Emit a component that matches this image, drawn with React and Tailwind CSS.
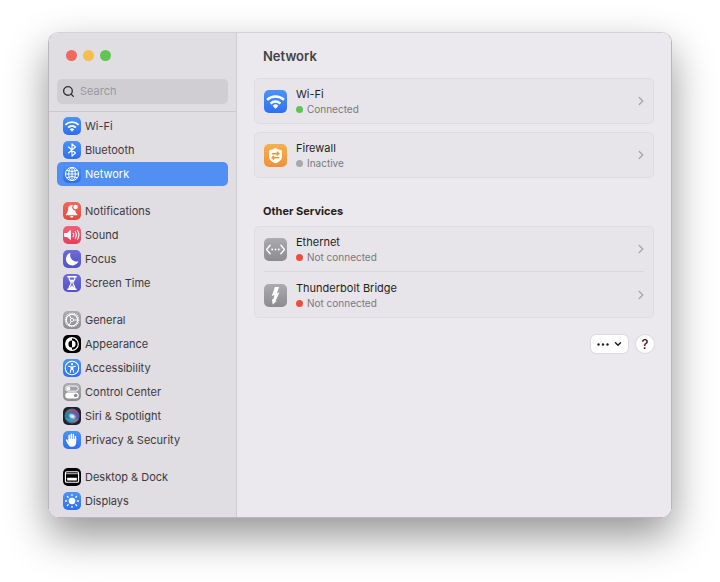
import { ChevronDown, ChevronRight, Search } from "lucide-react"

// Glyphs share a 24x24 canvas and take the colour of the tile they sit on

function WifiGlyph() {
  return (
    <svg viewBox="0 0 24 24" fill="none" stroke="currentColor" strokeWidth="2.5" className="size-full">
      <path d="M3.2 10.4a12.6 12.6 0 0 1 17.6 0" />
      <path d="M6.9 14.1a7.4 7.4 0 0 1 10.2 0" />
      <path d="M12 19.6 9 16.4a4.3 4.3 0 0 1 6 0z" fill="currentColor" stroke="none" />
    </svg>
  )
}

function BluetoothGlyph() {
  return (
    <svg viewBox="0 0 24 24" fill="none" stroke="currentColor" strokeWidth="1.5" strokeLinejoin="round" strokeLinecap="round" className="size-full">
      <path d="m7.4 8 9.2 8-4.6 4.2V3.8L16.6 8l-9.2 8" />
    </svg>
  )
}

function GlobeGlyph() {
  return (
    <svg viewBox="0 0 24 24" fill="none" stroke="currentColor" strokeWidth="1.3" className="size-full">
      <circle cx="12" cy="12" r="8.8" />
      <ellipse cx="12" cy="12" rx="4.4" ry="8.8" />
      <path d="M12 3.2v17.6M3.2 12h17.6M5 6.9q7 4 14 0M5 17.1q7-4 14 0" />
    </svg>
  )
}

function BellGlyph() {
  return (
    <svg viewBox="0 0 24 24" fill="currentColor" className="size-full">
      <path d="M13.2 4.2a5 5 0 0 0-6.4 4.6c-.2 4.4-.9 5.7-2.8 7.5-.5.5-.2 1.3.5 1.3h14c.7 0 1-.8.5-1.3-1.5-1.5-2.3-2.6-2.6-5a4.3 4.3 0 0 1-3.2-7.1z" />
      <path d="M9.3 18.7h4.6a2.3 2.3 0 0 1-4.6 0z" />
      <circle cx="16.8" cy="6.8" r="3" />
    </svg>
  )
}

function SpeakerGlyph() {
  return (
    <svg viewBox="0 0 24 24" fill="none" stroke="currentColor" strokeWidth="1.4" strokeLinecap="round" className="size-full">
      <path d="M2.4 9.4h3l4.2-3.7c.4-.3.9-.1.9.4v11.8c0 .5-.5.7-.9.4l-4.2-3.7h-3c-.4 0-.8-.3-.8-.8v-3.6c0-.5.4-.8.8-.8z" fill="currentColor" stroke="none" />
      <path d="M13.4 9.6a4.2 4.2 0 0 1 0 4.8M16.3 7.7a7.6 7.6 0 0 1 0 8.6M19.2 5.9a11 11 0 0 1 0 12.2" />
    </svg>
  )
}

function MoonGlyph() {
  return (
    <svg viewBox="0 0 24 24" fill="currentColor" className="size-full">
      <path d="M9 4.1a.6.6 0 0 1 .8.8 8.3 8.3 0 0 0 9.8 10.3.6.6 0 0 1 .7.9A8.7 8.7 0 1 1 9 4.1z" />
    </svg>
  )
}

function HourglassGlyph() {
  return (
    <svg viewBox="0 0 24 24" fill="none" stroke="currentColor" strokeWidth="1.5" strokeLinecap="round" strokeLinejoin="round" className="size-full">
      <path d="M6.5 3.8h11M6.5 20.2h11" strokeWidth="2" />
      <path d="M8 4.5c0 4 2.8 5 2.8 7.5S8 15.5 8 19.5h8c0-4-2.8-5-2.8-7.5S16 8.5 16 4.5" />
      <path d="M9.6 8h4.8L12 11.2zM9 19c0-2 3-3.4 3-3.4s3 1.4 3 3.4z" fill="currentColor" strokeWidth=".8" />
    </svg>
  )
}

function GearGlyph() {
  return (
    <svg viewBox="0 0 24 24" fill="none" stroke="currentColor" className="size-full">
      <circle cx="12" cy="12" r="8.9" strokeWidth="1.4" strokeDasharray="1.4 .93" />
      <circle cx="12" cy="12" r="7.6" strokeWidth="1.5" />
      <circle cx="12" cy="12" r="2.2" strokeWidth="1.2" />
      <path d="M14.2 12h5.4M10.9 10.1 8.2 5.4M10.9 13.9l-2.7 4.7" strokeWidth="1.3" />
    </svg>
  )
}

function AppearanceGlyph() {
  return (
    <svg viewBox="0 0 24 24" fill="none" className="size-full">
      <circle cx="12" cy="12" r="8.4" stroke="currentColor" strokeWidth="1.6" />
      <path d="M12 3.6a8.4 8.4 0 0 0 0 16.8v-3.6a4.8 4.8 0 0 1 0-9.6z" fill="currentColor" />
      <path d="M12 7.2a4.8 4.8 0 0 1 0 9.6z" fill="currentColor" />
    </svg>
  )
}

function AccessibilityGlyph() {
  return (
    <svg viewBox="0 0 24 24" fill="none" stroke="currentColor" strokeLinecap="round" strokeLinejoin="round" className="size-full">
      <circle cx="12" cy="12" r="9" strokeWidth="1.4" />
      <circle cx="12" cy="6.9" r="1.5" fill="currentColor" stroke="none" />
      <path d="M7.4 9.7 12 10.6l4.6-.9M12 10.6v3M9.7 17.8l1.2-4.6v-2.5h2.2v2.5l1.2 4.6" strokeWidth="1.4" />
    </svg>
  )
}

function ControlsGlyph() {
  return (
    <svg viewBox="0 0 24 24" fill="none" className="size-full">
      <rect x="3.6" y="4" width="16.8" height="6.8" rx="3.4" stroke="currentColor" strokeWidth="1.3" />
      <circle cx="7.2" cy="7.4" r="2.5" fill="currentColor" />
      <rect x="3" y="12.8" width="18" height="7.8" rx="3.9" fill="currentColor" />
      <circle cx="16.9" cy="16.7" r="2.4" fill="#8e8e92" />
    </svg>
  )
}

function SiriGlyph() {
  return (
    <svg viewBox="0 0 24 24" className="size-full">
      <defs>
        <radialGradient id="siri-core">
          <stop offset="0" stopColor="#ffffff" />
          <stop offset=".45" stopColor="#a9dcec" stopOpacity=".9" />
          <stop offset="1" stopColor="#4a8fd0" stopOpacity="0" />
        </radialGradient>
        <linearGradient id="siri-ring" x1="0" y1="0" x2="1" y2="1">
          <stop offset="0" stopColor="#2f8f86" />
          <stop offset=".45" stopColor="#2f6fa8" />
          <stop offset=".75" stopColor="#7c4aa8" />
          <stop offset="1" stopColor="#d0345e" />
        </linearGradient>
      </defs>
      <circle cx="12" cy="12" r="10" fill="url(#siri-ring)" />
      <path d="M4 6.5C9 1.5 19 3 21.5 11c-5-4-11-5-17.5-4.5z" fill="#d63a6b" opacity=".75" />
      <path d="M3 14c3 7 13 9 18 2-6 1-12 0-18-2z" fill="#38b89c" opacity=".7" />
      <ellipse cx="12.5" cy="12.3" rx="7" ry="5" fill="url(#siri-core)" transform="rotate(25 12 12)" />
    </svg>
  )
}

function HandGlyph() {
  return (
    <svg viewBox="0 0 24 24" fill="none" stroke="currentColor" strokeWidth="2" strokeLinecap="round" className="size-full">
      <path d="M8.2 12V6M11 11V4.2M13.8 11V4.8M16.6 12V7.4" />
      <path d="m4.9 12.2 2.3 4.2" strokeWidth="2.2" />
      <path d="M7.2 10.5h10.4v4.2c0 3.8-2 6.3-5.4 6.3-2.8 0-4.4-1.3-5.6-3.8l-.8-2 1.4-.8z" fill="currentColor" stroke="none" />
    </svg>
  )
}

function DockGlyph() {
  return (
    <svg viewBox="0 0 24 24" fill="none" stroke="currentColor" className="size-full">
      <rect x="3.2" y="5" width="17.6" height="14" rx="1.8" strokeWidth="1.5" />
      <path d="M4 7.4h16" strokeWidth="1.6" opacity=".6" />
      <rect x="5.6" y="13" width="12.8" height="3.8" rx=".6" fill="currentColor" stroke="none" />
    </svg>
  )
}

function SunGlyph() {
  return (
    <svg viewBox="0 0 24 24" fill="none" stroke="currentColor" strokeWidth="1.7" strokeLinecap="round" className="size-full">
      <circle cx="12" cy="12" r="4.4" fill="currentColor" stroke="none" />
      <path d="M12 3.4v1.4M12 19.2v1.4M3.4 12h1.4M19.2 12h1.4M5.9 5.9l1 1M17.1 17.1l1 1M5.9 18.1l1-1M17.1 6.9l1-1" />
    </svg>
  )
}

function ShieldGlyph() {
  return (
    <svg viewBox="0 0 24 24" fill="none" className="size-full">
      <path d="M12 4c2 1.5 4 2.2 6 2.5.5.1.8.5.8 1v5.8c0 3.3-2.8 5.2-6.3 6.8-.3.2-.7.2-1 0-3.5-1.6-6.3-3.5-6.3-6.8V7.5c0-.5.3-.9.8-1C8 6.2 10 5.5 12 4z" fill="currentColor" />
      <path d="M8.2 10.1h7M13.5 8.2l2 1.9-2 1.9M15.8 14.3h-7M10.5 12.4l-2 1.9 2 1.9" stroke="#f0983a" strokeWidth="1.5" />
    </svg>
  )
}

function EthernetGlyph() {
  return (
    <svg viewBox="0 0 24 24" fill="none" stroke="currentColor" strokeWidth="1.4" strokeLinecap="round" strokeLinejoin="round" className="size-full">
      <path d="M6.4 7.6 2.7 12l3.7 4.4M17.6 7.6l3.7 4.4-3.7 4.4" />
      <path d="M8.6 12h.01M12 12h.01M15.4 12h.01" strokeWidth="2" />
    </svg>
  )
}

function BoltGlyph() {
  return (
    <svg viewBox="0 0 24 24" fill="currentColor" className="size-full">
      <path d="M11.4 3.2h4.3l-2.2 6.4 2.6-.8-4.2 9.3 1.6-.5-4.4 3.7-.8-5.7 1.2.9 1.5-4.9-3 .9z" />
    </svg>
  )
}

const BLUE = "bg-linear-to-b from-[#4c93f8] to-[#2f6ff0]"
const RED = "bg-linear-to-b from-[#f0695c] to-[#e5483a]"
const PINK = "bg-linear-to-b from-[#f2607a] to-[#e63e5e]"
const INDIGO = "bg-linear-to-b from-[#6f6cdb] to-[#5250c4]"
const GRAY = "bg-linear-to-b from-[#acacb0] to-[#8c8c90]"
const ORANGE = "bg-linear-to-b from-[#f6b04f] to-[#f0913a]"

const SIDEBAR_GROUPS = [
  [
    { label: "Wi-Fi", icon: WifiGlyph, tile: BLUE },
    { label: "Bluetooth", icon: BluetoothGlyph, tile: BLUE },
    { label: "Network", icon: GlobeGlyph, tile: BLUE, active: true },
  ],
  [
    { label: "Notifications", icon: BellGlyph, tile: RED },
    { label: "Sound", icon: SpeakerGlyph, tile: PINK },
    { label: "Focus", icon: MoonGlyph, tile: INDIGO },
    { label: "Screen Time", icon: HourglassGlyph, tile: INDIGO },
  ],
  [
    { label: "General", icon: GearGlyph, tile: GRAY },
    { label: "Appearance", icon: AppearanceGlyph, tile: "bg-black" },
    { label: "Accessibility", icon: AccessibilityGlyph, tile: BLUE },
    { label: "Control Center", icon: ControlsGlyph, tile: GRAY },
    { label: "Siri & Spotlight", icon: SiriGlyph, tile: "bg-[#20202a]" },
    { label: "Privacy & Security", icon: HandGlyph, tile: BLUE },
  ],
  [
    { label: "Desktop & Dock", icon: DockGlyph, tile: "bg-black" },
    { label: "Displays", icon: SunGlyph, tile: BLUE },
  ],
]

const SERVICES = [
  { name: "Wi-Fi", status: "Connected", dot: "bg-[#5fc454]", icon: WifiGlyph, tile: BLUE },
  { name: "Firewall", status: "Inactive", dot: "bg-[#a9a8ac]", icon: ShieldGlyph, tile: ORANGE },
]

const OTHER_SERVICES = [
  { name: "Ethernet", status: "Not connected", dot: "bg-[#ec4e3d]", icon: EthernetGlyph, tile: GRAY },
  { name: "Thunderbolt Bridge", status: "Not connected", dot: "bg-[#ec4e3d]", icon: BoltGlyph, tile: GRAY },
]

function SidebarItem({ item }) {
  const Icon = item.icon
  return (
    <li>
      <button
        aria-current={item.active ? "page" : undefined}
        className={`flex h-6 w-full items-center gap-1 rounded-[5px] px-1.5 text-left text-[11px] ${
          item.active ? "bg-[#528ff2] text-white" : "text-[#3b3a3e]"
        }`}
      >
        <span className={`size-[18px] shrink-0 overflow-hidden rounded-[5px] text-white ${item.tile}`}>
          <Icon />
        </span>
        {item.label}
      </button>
    </li>
  )
}

function Sidebar() {
  return (
    <aside className="flex w-[188px] shrink-0 flex-col overflow-hidden border-r border-[#cfccd2] bg-[#e0dde3]">
      <div className="flex gap-1.5 px-[17px] pt-[17px]">
        <button aria-label="Close" className="size-[11px] rounded-full bg-[#ec6a5e]" />
        <button aria-label="Minimize" className="size-[11px] rounded-full bg-[#f4bf50]" />
        <button aria-label="Zoom" className="size-[11px] rounded-full bg-[#61c554]" />
      </div>

      <div className="border-b border-[#cbc8ce] px-2 pt-[18px] pb-[7px]">
        <div className="flex h-[25px] items-center gap-[5px] rounded-[5px] bg-[#d0ced3] px-[5px]">
          <Search size={13} strokeWidth={2.5} className="shrink-0 text-[#333236]" />
          <input
            type="search"
            aria-label="Search"
            placeholder="Search"
            className="w-full min-w-0 bg-transparent text-[11px] outline-none placeholder:text-[#9b999e]"
          />
        </div>
      </div>

      <nav className="flex min-h-0 flex-col gap-[13px] px-2 pt-0.5">
        {SIDEBAR_GROUPS.map((group) => (
          <ul key={group[0].label}>
            {group.map((item) => (
              <SidebarItem key={item.label} item={item} />
            ))}
          </ul>
        ))}
      </nav>
    </aside>
  )
}

function ServiceRow({ service }) {
  const Icon = service.icon
  return (
    <button className="flex w-full items-center gap-[9px] py-1.5 text-left">
      <span className={`size-[23px] shrink-0 overflow-hidden rounded-[5px] text-white ${service.tile}`}>
        <Icon />
      </span>
      <span className="flex-1 pt-0.5">
        <span className="block text-[11px] leading-[15px] text-[#1f1e22]">{service.name}</span>
        <span className="flex items-center gap-1 text-[10px] leading-[15px] text-[#7a787d]">
          <span className={`size-[7px] rounded-full ${service.dot}`} />
          {service.status}
        </span>
      </span>
      <ChevronRight size={14} strokeWidth={2.5} className="-mr-1 text-[#aaa8ad]" />
    </button>
  )
}

function Card({ services }) {
  return (
    <section className="flex flex-col gap-px divide-y divide-[#dad8dd] rounded-[5px] border border-[#dedce1] bg-[#e7e5ea] px-[9px]">
      {services.map((service) => (
        <ServiceRow key={service.name} service={service} />
      ))}
    </section>
  )
}

export default function App() {
  return (
    <div className="flex h-screen bg-white px-12 pt-8 pb-16 font-['Inter',sans-serif]">
      <div className="flex min-w-0 flex-1 overflow-hidden rounded-[10px] border border-[#b9b8bb] border-t-[#d3d2d5] shadow-[0_18px_42px_rgba(0,0,0,0.42)]">
        <Sidebar />

        <main className="min-w-0 flex-1 bg-[#ebe9ee] px-[17px] pt-3.5">
          <h1 className="px-[9px] text-[13px] leading-[18px] font-semibold text-[#434246]">Network</h1>

          <div className="mt-[13px] flex flex-col gap-2">
            {SERVICES.map((service) => (
              <Card key={service.name} services={[service]} />
            ))}
          </div>

          <h2 className="mt-[25px] mb-[7px] px-[9px] text-[11px] leading-[16px] font-bold text-[#1f1e22]">
            Other Services
          </h2>
          <Card services={OTHER_SERVICES} />

          <div className="mt-[17px] flex justify-end gap-2">
            <button
              aria-label="Add service"
              className="flex h-[18px] w-[37px] items-center justify-center gap-1 rounded-[5px] bg-white text-[#1f1e22] shadow-[0_0_1px_1px_rgba(0,0,0,0.07)]"
            >
              <svg viewBox="0 0 12 3" fill="currentColor" className="h-[3px] w-3">
                <circle cx="1.5" cy="1.5" r="1.2" />
                <circle cx="6" cy="1.5" r="1.2" />
                <circle cx="10.5" cy="1.5" r="1.2" />
              </svg>
              <ChevronDown size={10} strokeWidth={3.6} />
            </button>
            <button className="size-[18px] rounded-full bg-white text-[13px] leading-[18px] font-medium text-[#1f1e22] shadow-[0_0_1px_1px_rgba(0,0,0,0.07)]">
              ?
            </button>
          </div>
        </main>
      </div>
    </div>
  )
}
